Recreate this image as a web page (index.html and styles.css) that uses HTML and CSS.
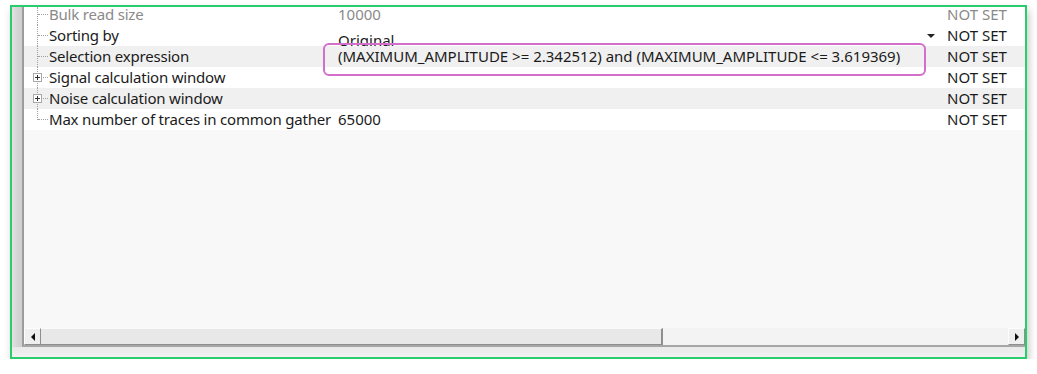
FILE: index.html
```html
<!DOCTYPE html>
<html lang="en">
<head>
    <meta charset="UTF-8">
    <title>Properties</title>
    <link rel="stylesheet" href="styles.css">
</head>
<body>
    <div class="frame">
        <div class="main">
            <div class="bevel-left"></div>
            <div class="panel">
                <div class="grid">
                    <div class="row disabled first">
                        <div class="tree"></div>
                        <div class="label">Bulk read size</div>
                        <div class="value">10000</div>
                        <div class="drop"></div>
                        <div class="state">NOT SET</div>
                    </div>
                    <div class="row">
                        <div class="tree"></div>
                        <div class="label">Sorting by</div>
                        <div class="value low">Original</div>
                        <div class="drop"><span class="arrow"></span></div>
                        <div class="state">NOT SET</div>
                    </div>
                    <div class="row alt">
                        <div class="tree"></div>
                        <div class="label">Selection expression</div>
                        <div class="value highlight">(MAXIMUM_AMPLITUDE &gt;= 2.342512) and (MAXIMUM_AMPLITUDE &lt;= 3.619369)</div>
                        <div class="drop"></div>
                        <div class="state">NOT SET</div>
                    </div>
                    <div class="row">
                        <div class="tree"><span class="plus"></span></div>
                        <div class="label">Signal calculation window</div>
                        <div class="value"></div>
                        <div class="drop"></div>
                        <div class="state">NOT SET</div>
                    </div>
                    <div class="row alt">
                        <div class="tree"><span class="plus"></span></div>
                        <div class="label">Noise calculation window</div>
                        <div class="value"></div>
                        <div class="drop"></div>
                        <div class="state">NOT SET</div>
                    </div>
                    <div class="row last">
                        <div class="tree"></div>
                        <div class="label">Max number of traces in common gather</div>
                        <div class="value">65000</div>
                        <div class="drop"></div>
                        <div class="state">NOT SET</div>
                    </div>
                </div>
                <div class="scrollbar">
                    <div class="btn"><span class="tri-left"></span></div>
                    <div class="thumb"></div>
                    <div class="track"></div>
                    <div class="btn"><span class="tri-right"></span></div>
                </div>
            </div>
        </div>
        <div class="bevel-bottom"></div>
    </div>
</body>
</html>
```

FILE: styles.css
```css
* {
    margin: 0;
    padding: 0;
    box-sizing: border-box;
}

body {
    font-family: 'Noto Sans', 'Open Sans', sans-serif;
    font-size: 15px;
    background: white;
    color: #1b1b1b;
}

.frame {
    margin: 5px 0 0 10px;
    width: 1017px;
    height: 354px;
    border: 2px solid #2bcb6e;
    box-shadow: 2px 5px 8px rgba(0,0,0,0.22);
    display: flex;
    flex-direction: column;
    background: #ececec;
}

.main {
    display: flex;
    height: 340px;
}

.bevel-left {
    width: 10px;
    background: linear-gradient(90deg, #e2e2e2 0%, #d4d4d4 60%, #cfcfcf 100%);
}

.panel {
    flex: 1;
    display: flex;
    flex-direction: column;
    background: #f8f8f8;
    border-left: 2px solid #9c9c9c;
    border-bottom: 2px solid #a6a6a6;
    overflow: hidden;
}

.grid {
    flex: 1;
}

.row {
    display: grid;
    grid-template-columns: 25px 289px 1fr 20px 79px;
    height: 21px;
    line-height: 21px;
    background: white;
    white-space: nowrap;
}

/* top row is partly scrolled off in the original */
.row.first {
    height: 18px;
    line-height: 14px;
}

.row.alt {
    background: #f0f0f0;
}

.row.disabled {
    color: #8a8a8a;
}

.tree {
    position: relative;
}

/* dotted tree lines */
.tree::before {
    content: "";
    position: absolute;
    left: 13px;
    top: 0;
    bottom: 0;
    border-left: 1px dotted #a0a0a0;
}

.row.last .tree::before {
    bottom: 10px;
}

.tree::after {
    content: "";
    position: absolute;
    left: 14px;
    top: 10px;
    width: 10px;
    border-top: 1px dotted #a0a0a0;
}

.row.first .tree::after {
    top: 7px;
}

.plus {
    position: absolute;
    left: 9px;
    top: 6px;
    width: 9px;
    height: 9px;
    border: 1px solid #a8a8a8;
    background: white;
    z-index: 1;
}

.plus::before,
.plus::after {
    content: "";
    position: absolute;
    background: #333;
}

.plus::before {
    left: 1px;
    top: 3px;
    width: 5px;
    height: 1px;
}

.plus::after {
    left: 3px;
    top: 1px;
    width: 1px;
    height: 5px;
}

.label {
    letter-spacing: -0.2px;
}

.value {
    position: relative;
    overflow: visible;
}

.value.low {
    padding-top: 3px;
    line-height: 24px;
    overflow: hidden;
}

.highlight::before {
    content: "";
    position: absolute;
    left: -15px;
    top: -3px;
    width: 599px;
    height: 29px;
    border: 2px solid #d36fcb;
    border-radius: 6px;
}

.drop {
    display: flex;
    align-items: center;
    justify-content: flex-start;
}

.arrow {
    width: 0;
    height: 0;
    border-left: 4px solid transparent;
    border-right: 4px solid transparent;
    border-top: 4px solid #222;
    margin-left: 1px;
}

.state {
    padding-left: 1px;
}

.scrollbar {
    display: flex;
    height: 17px;
    background: #ededed;
}

.btn {
    width: 17px;
    display: flex;
    align-items: center;
    justify-content: center;
    background: #efefef;
    border-top: 1px solid #fdfdfd;
    border-left: 1px solid #fdfdfd;
    border-right: 1px solid #8e8e8e;
    border-bottom: 1px solid #8e8e8e;
}

.tri-left {
    border-top: 4px solid transparent;
    border-bottom: 4px solid transparent;
    border-right: 4px solid #111;
}

.tri-right {
    border-top: 4px solid transparent;
    border-bottom: 4px solid transparent;
    border-left: 4px solid #111;
}

.thumb {
    width: 622px;
    background: #e8e8e8;
    border-top: 1px solid #fafafa;
    border-right: 2px solid #8e8e8e;
    border-bottom: 1px solid #8e8e8e;
}

.track {
    flex: 1;
    background: #f3f3f3;
}

.bevel-bottom {
    flex: 1;
    background: linear-gradient(180deg, #e9e9e9, #f2f2f2);
}
```
